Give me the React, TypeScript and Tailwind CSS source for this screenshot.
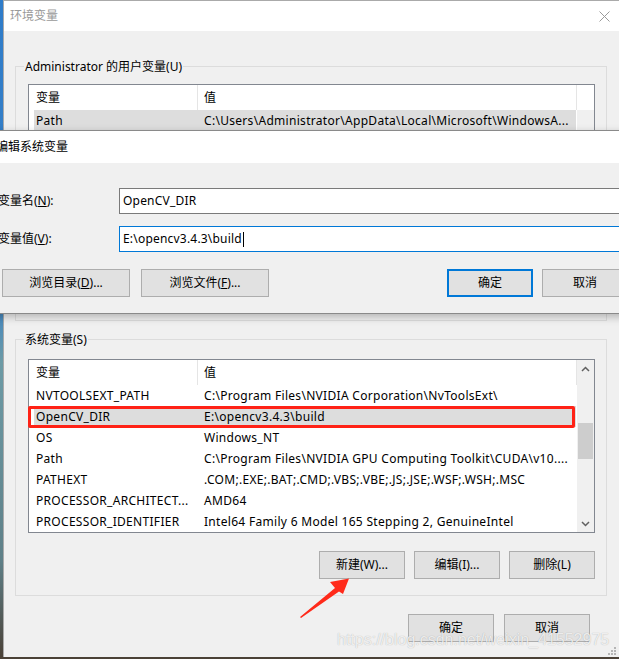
import type { ReactNode } from 'react';

type VarRow = { name: string; value: string; selected?: boolean };

const USER_VARS: VarRow[] = [
  { name: 'Path', value: 'C:\\Users\\Administrator\\AppData\\Local\\Microsoft\\WindowsA...', selected: true },
  { name: 'TEMP', value: '%USERPROFILE%\\AppData\\Local\\Temp' },
  { name: 'TMP', value: '%USERPROFILE%\\AppData\\Local\\Temp' },
];

const SYSTEM_VARS: VarRow[] = [
  { name: 'NVTOOLSEXT_PATH', value: 'C:\\Program Files\\NVIDIA Corporation\\NvToolsExt\\' },
  { name: 'OpenCV_DIR', value: 'E:\\opencv3.4.3\\build', selected: true },
  { name: 'OS', value: 'Windows_NT' },
  { name: 'Path', value: 'C:\\Program Files\\NVIDIA GPU Computing Toolkit\\CUDA\\v10....' },
  { name: 'PATHEXT', value: '.COM;.EXE;.BAT;.CMD;.VBS;.VBE;.JS;.JSE;.WSF;.WSH;.MSC' },
  { name: 'PROCESSOR_ARCHITECT...', value: 'AMD64' },
  { name: 'PROCESSOR_IDENTIFIER', value: 'Intel64 Family 6 Model 165 Stepping 2, GenuineIntel' },
];

function WinButton({ children, className = '' }: { children: ReactNode; className?: string }) {
  return (
    <button
      type="button"
      className={`h-[28px] shrink-0 bg-[#e1e1e1] text-[12px] text-black flex items-center justify-center ${className}`}
    >
      {children}
    </button>
  );
}

function Chevron({ up }: { up?: boolean }) {
  return (
    <svg width="9" height="6" viewBox="0 0 9 6">
      <polyline
        points={up ? '1,5 4.5,1.5 8,5' : '1,1 4.5,4.5 8,1'}
        fill="none"
        stroke="#606060"
        strokeWidth="1.5"
      />
    </svg>
  );
}

function VarList({ rows, scroll, children }: { rows: VarRow[]; scroll?: boolean; children?: ReactNode }) {
  return (
    <div className="relative w-[567px] h-[174px] border border-[#828790] bg-white flex">
      <div className="w-[548px] flex flex-col">
        {/* 헤더 */}
        <div className="h-[25px] flex items-center">
          <div className="w-[168px] pl-[7px]">变量</div>
          <div className="w-[1px] h-full bg-[#e5e5e5]" />
          <div className="w-[378px] pl-[6px]">值</div>
          <div className="w-[1px] h-full bg-[#e5e5e5]" />
        </div>
        {rows.map((row) => (
          <div key={row.name} className="h-[21px] pl-[5px] pr-[1px] flex tracking-[0.3px]">
            <div className={`flex-1 flex items-center whitespace-nowrap overflow-hidden ${row.selected ? 'bg-[#dddddd]' : ''}`}>
              <div className="w-[163px] pl-[2px] overflow-hidden">{row.name}</div>
              <div className="flex-1 pl-[7px] overflow-hidden">{row.value}</div>
            </div>
          </div>
        ))}
      </div>
      {scroll ? (
        <div className="w-[17px] bg-[#f0f0f0] flex flex-col">
          <div className="h-[17px] flex items-center justify-center">
            <Chevron up />
          </div>
          <div className="flex-1 px-[1px]">
            <div className="mt-[46px] h-[36px] bg-[#cdcdcd]" />
          </div>
          <div className="h-[17px] flex items-center justify-center">
            <Chevron />
          </div>
        </div>
      ) : (
        <div className="w-[17px] flex flex-col">
          <div className="h-[25px] bg-white" />
          <div className="flex-1 bg-[#f0f0f0]" />
        </div>
      )}
      {children}
    </div>
  );
}

function GroupBox({ label, listGap, rows, scroll, children }: {
  label: string;
  listGap: string;
  rows: VarRow[];
  scroll?: boolean;
  children?: ReactNode;
}) {
  return (
    <div className="w-[592px] border border-[#dcdcdc] pl-[12px] pr-[11px] pb-[16px] flex flex-col">
      <div className="-mt-[9px] -ml-[4px] w-fit bg-[#f0f0f0] px-[1px] leading-[17px]">{label}</div>
      <div className={listGap}>
        <VarList rows={rows} scroll={scroll}>{children}</VarList>
      </div>
      <div className="mt-[18px] flex justify-end gap-[9px]">
        <WinButton className="w-[86px] border border-[#adadad]">新建(W)...</WinButton>
        <WinButton className="w-[86px] border border-[#adadad]">编辑(I)...</WinButton>
        <WinButton className="w-[86px] border border-[#adadad]">删除(L)</WinButton>
      </div>
    </div>
  );
}

export default function App() {
  return (
    <div className="relative w-[619px] h-[659px] overflow-hidden bg-[linear-gradient(180deg,#2f7cc9_0%,#3a82c6_45%,#6d9ba6_55%,#5f8088_85%,#4a4036_100%)] text-[12px] text-black font-['Noto_Sans','Noto_Sans_CJK_SC',sans-serif]">
      {/* 환경변수 메인 창 */}
      <div className="absolute left-[3px] top-0 w-[624px] h-[657px] bg-[#f0f0f0] border-t border-l border-[#aaaaaa] flex flex-col">
        <div className="h-[30px] bg-white flex items-center">
          <span className="pl-[6px] text-[#999999]">环境变量</span>
          <div className="ml-auto w-[46px] h-full flex items-center justify-center">
            <svg width="11" height="11" viewBox="0 0 11 11">
              <path d="M0.5 0.5 L10.5 10.5 M10.5 0.5 L0.5 10.5" stroke="#9a9a9a" strokeWidth="1" />
            </svg>
          </div>
        </div>

        <div className="px-[11px] flex flex-col">
          <div className="mt-[35px]">
            <GroupBox label="Administrator 的用户变量(U)" listGap="mt-[9px]" rows={USER_VARS} />
          </div>

          <div className="mt-[18px]">
            <GroupBox label="系统变量(S)" listGap="mt-[11px]" rows={SYSTEM_VARS} scroll>
              <div className="absolute left-[-1px] top-[46px] w-[547px] h-[22px] border-[3px] border-[#ff2216] rounded-[2px]" />
            </GroupBox>
          </div>

          <div className="mt-[18px] pr-[26px] flex justify-end gap-[10px]">
            <WinButton className="w-[86px] border border-[#adadad]">确定</WinButton>
            <WinButton className="w-[86px] border border-[#adadad]">取消</WinButton>
          </div>
        </div>
      </div>

      {/* 편집 대화상자 */}
      <div className="absolute left-[-10px] top-[130px] w-[660px] h-[184px] bg-[#f0f0f0] border border-[#8a8a8a] shadow-[0_3px_8px_rgba(0,0,0,0.25)] flex flex-col">
        <div className="h-[32px] bg-white flex items-center pl-[5px]">编辑系统变量</div>
        <div className="flex flex-col">
          <div className="mt-[25px] flex items-center pl-[7px]">
            <div className="w-[121px]">
              变量名(<span className="underline">N</span>):
            </div>
            <div className="flex-1 h-[26px] bg-white border border-[#7a7a7a] flex items-center pl-[3px] tracking-[0.2px]">OpenCV_DIR</div>
          </div>
          <div className="mt-[12px] flex items-center pl-[7px]">
            <div className="w-[121px]">
              变量值(<span className="underline">V</span>):
            </div>
            <div className="flex-1 h-[26px] bg-white border border-[#0078d7] flex items-center pl-[3px] tracking-[0.2px]">
              E:\opencv3.4.3\build
              <span className="inline-block w-[1px] h-[15px] bg-black ml-[1px]" />
            </div>
          </div>
          <div className="mt-[17px] pl-[11px] flex">
            <WinButton className="w-[128px] border border-[#adadad]">
              浏览目录(<span className="underline">D</span>)...
            </WinButton>
            <WinButton className="w-[128px] ml-[11px] border border-[#adadad]">
              浏览文件(<span className="underline">F</span>)...
            </WinButton>
            <WinButton className="w-[86px] ml-[178px] border-2 border-[#0078d7]">确定</WinButton>
            <WinButton className="w-[86px] ml-[9px] border border-[#adadad]">取消</WinButton>
          </div>
        </div>
      </div>

      {/* 빨간 화살표 */}
      <svg className="absolute left-[295px] top-[572px]" width="60" height="50" viewBox="0 0 60 50">
        <polygon points="5,45 40,16 35,10 54,6.5 48,22 44,19.5 6,46" fill="#ff2a1a" />
      </svg>

      {/* 크기 조절 손잡이 */}
      <svg className="absolute left-[607px] top-[646px]" width="10" height="10" viewBox="0 0 10 10">
        <rect x="7" y="1" width="2" height="2" fill="#b5b5b5" />
        <rect x="4" y="4" width="2" height="2" fill="#b5b5b5" />
        <rect x="7" y="4" width="2" height="2" fill="#b5b5b5" />
        <rect x="1" y="7" width="2" height="2" fill="#b5b5b5" />
        <rect x="4" y="7" width="2" height="2" fill="#b5b5b5" />
        <rect x="7" y="7" width="2" height="2" fill="#b5b5b5" />
      </svg>

      {/* 워터마크 */}
      <div className="absolute left-[337px] top-[630px] text-[16px] leading-[20px] whitespace-nowrap font-['Liberation_Sans',sans-serif] text-[rgba(255,255,255,0.8)] [text-shadow:0_0_1px_rgba(0,0,0,0.3)]">
        https://blog.csdn.net/weixin_41552975
      </div>
    </div>
  );
}
